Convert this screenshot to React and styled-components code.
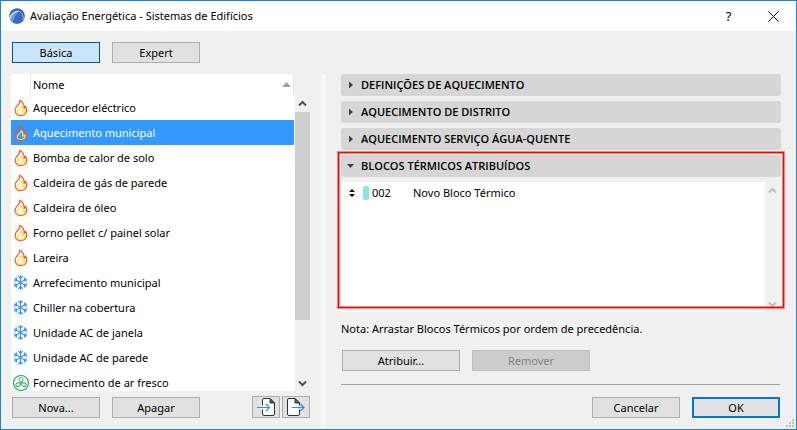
import React, { useState } from "react";
import styled, { createGlobalStyle, css } from "styled-components";

const GlobalStyle = createGlobalStyle`
  *, *::before, *::after { box-sizing: border-box; }
  body { margin: 0; background: #f0f0f0; }
  body, button { font-family: "Noto Sans", "Open Sans", sans-serif; font-size: 11px; color: #000; }
`;

const Window = styled.div`
  display: flex;
  flex-direction: column;
  height: 100vh;
  border: 1px solid #1883d7;
  background: #f0f0f0;
  position: relative;
`;

const TitleBar = styled.header`
  display: flex;
  align-items: center;
  flex: none;
  height: 30px;
  padding: 0 10px 0 8px;
  background: #fff;
`;

const Title = styled.h1`
  flex: 1;
  margin: 0 0 0 5px;
  font-size: 11px;
  line-height: 18px;
  font-weight: 400;
`;

const CaptionButton = styled.button`
  display: flex;
  align-items: center;
  justify-content: center;
  width: 25px;
  height: 24px;
  padding: 0;
  margin-left: 20px;
  border: 0;
  background: transparent;
  font-size: 13px;
`;

const Toolbar = styled.div`
  display: flex;
  flex: none;
  gap: 12px;
  padding: 11px;
`;

const Button = styled.button`
  flex: 0 0 ${(p) => (p.$wide ? "118px" : "88px")};
  height: 21px;
  padding: 0;
  line-height: 18px;
  border: 1px solid #adadad;
  background: #e1e1e1;
  ${(p) => p.$pressed && css`
    border-color: #005499;
    background: #cce4f7;
  `}
  ${(p) => p.$primary && css`
    border: 2px solid #0078d7;
    line-height: 16px;
  `}
  &:disabled {
    border-color: #bfbfbf;
    background: #ccc;
    color: #838383;
  }
`;

const IconButton = styled.button`
  display: flex;
  align-items: center;
  justify-content: center;
  flex: 0 0 28px;
  height: 22px;
  padding: 0;
  border: 1px solid #adadad;
  background: #e1e1e1;
`;

const Body = styled.main`
  flex: 1;
  min-height: 0;
  display: grid;
  grid-template-columns: 299fr 11px 5px 15px 440fr;
  grid-template-rows: minmax(0, 1fr);
  padding: 0 15px 0 10px;
`;

const Column = styled.section`
  display: flex;
  flex-direction: column;
  min-width: 0;
  min-height: 0;
  padding-bottom: 11px;
`;

const DetailColumn = styled(Column)`
  grid-column: 5;
`;

const Divider = styled.div`
  grid-column: 3;
  background: #f7f7f7;
`;

const ListHead = styled.div`
  display: flex;
  align-items: center;
  flex: none;
  height: 21px;
  margin-right: 16px;
  padding-right: 2px;
  background: #fff;
  border-right: 1px solid #e5e5e5;
`;

const HeadIconCell = styled.span`
  flex: none;
  width: 20px;
  height: 21px;
  border-right: 1px solid #e5e5e5;
`;

const HeadLabel = styled.span`
  flex: 1;
  padding: 1px 0 0 2px;
  line-height: 18px;
`;

const ListBody = styled.div`
  flex: 1;
  min-height: 0;
  display: flex;
`;

const Items = styled.ul`
  flex: 1;
  min-width: 0;
  margin: 0;
  padding: 0;
  list-style: none;
  overflow: hidden;
  background: #fff;
`;

const Item = styled.li`
  display: flex;
  align-items: center;
  height: 25px;
  margin-right: 1px;
  padding-left: 2px;
  gap: 4px;
  white-space: nowrap;
  background: ${(p) => (p.$selected ? "#3399ff" : "transparent")};
  color: ${(p) => (p.$selected ? "#fff" : "#000")};
  svg { flex: none; }
`;

const ScrollBar = styled.div`
  flex: 0 0 15px;
  display: flex;
  flex-direction: column;
  align-items: center;
  background: #f0f0f0;
  padding: 5px 0 4px;
`;

const Track = styled.div`
  flex: 1;
  align-self: stretch;
  display: flex;
  flex-direction: column;
  margin: 5px 0;
`;

const Thumb = styled.div`
  flex: 0 0 79%;
  background: #cdcdcd;
`;

const Actions = styled.div`
  display: flex;
  flex: none;
  align-items: flex-end;
  gap: 12px;
  padding-left: 1px;
  margin-top: 5px;
`;

const IconGroup = styled.div`
  display: flex;
  gap: 2px;
  margin-left: auto;
`;

const Panel = styled.section`
  flex: none;
  margin-bottom: 5px;
  position: relative;
`;

const OpenPanel = styled(Panel)`
  flex: 1;
  min-height: 0;
  margin-bottom: 0;
  display: flex;
  flex-direction: column;
`;

const PanelHeader = styled.button`
  display: flex;
  align-items: center;
  flex: none;
  width: 100%;
  height: 22px;
  padding: 0 6px;
  gap: 6px;
  border: 0;
  border-radius: 3px;
  background: #d6d6d6;
  font-family: "Open Sans", "Noto Sans", sans-serif;
  font-weight: 600;
  line-height: 18px;
  text-align: left;
`;

const PanelBody = styled.div`
  flex: 1;
  min-height: 0;
  display: flex;
  margin: 5px 1px 0 0;
  background: #fff;
`;

const BlockRow = styled.div`
  flex: 1;
  display: flex;
  align-items: center;
  align-self: flex-start;
  height: 21px;
  padding-left: 8px;
`;

const Swatch = styled.span`
  width: 6px;
  height: 14px;
  margin: 0 3px 0 8px;
  border-radius: 2px;
  background: #8ce6e6;
`;

const BlockId = styled.span`
  width: 41px;
`;

const Highlight = styled.div`
  position: absolute;
  inset: -3px -3px 4px;
  border: 1px solid #f00;
  box-shadow: 0 0 0 1px rgba(255, 0, 0, 0.45), inset 0 0 0 1px rgba(255, 0, 0, 0.45);
  pointer-events: none;
`;

const Note = styled.p`
  flex: none;
  margin: 8px 0 7px;
  line-height: 18px;
`;

const Footer = styled.footer`
  display: flex;
  flex: none;
  justify-content: flex-end;
  gap: 12px;
  margin: 13px 1px 0 0;
  padding-top: 12px;
  border-top: 1px solid #a0a0a0;
`;

const Grip = styled.svg`
  position: absolute;
  right: 2px;
  bottom: 2px;
`;

const Logo = () => (
  <svg width="16" height="16" viewBox="0 0 16 16" aria-hidden="true">
    <defs>
      <linearGradient id="globe" x1="0" y1="0" x2="1" y2="1">
        <stop offset="0" stopColor="#2f78c8" />
        <stop offset="1" stopColor="#2c459f" />
      </linearGradient>
    </defs>
    <circle cx="8" cy="8" r="7.8" fill="url(#globe)" />
    <path d="M.6 11C2.400 6 5.500 3.600 9.500 3.300" fill="none" stroke="#e6effa" strokeWidth="1.600" />
    <path d="M1.200 12.300C3 7 6 4.500 9.800 4.300 6.500 6.500 4.600 10 4 14.700Z" fill="#6c9be6" />
    <path d="M9.800 4.300C12.500 5 13.600 8.500 13.800 12.300 11.500 15.200 8 16 5 15 5 10.500 6.900 6.500 9.800 4.300Z" fill="#3c66cb" />
    <path d="M9.600 3.400C12.500 3.600 14.200 7 14.600 11.500" fill="none" stroke="#c2d4f2" strokeWidth=".9" />
  </svg>
);

const Flame = () => (
  <svg width="16" height="18" viewBox="0 0 16 18" fill="none" aria-hidden="true">
    <path d="M6.800 1.300C7.400 4.200 5 5.800 3.300 8 1.300 10.700 1.700 14 4.400 15.700 6.800 17.100 10.300 16.800 12.200 14.800 14.100 12.800 13.800 9.500 12.500 7.200 12.300 8.300 11.900 9 11.100 9.400 11.300 6 9.800 2.800 6.800 1.300Z" stroke="#f4512c" strokeWidth="1.200" strokeLinejoin="round" />
    <path d="M8.300 6.800C8.300 9.300 4.700 9.900 4.200 12.300 3.900 14.300 5.500 15.500 7.800 15.500 10.600 15.500 12.300 14 12.400 11 11.500 12 10.700 12.200 9.600 12.200 10.200 10.200 9.700 8 8.300 6.800Z" stroke="#ffe03a" strokeWidth="1.200" strokeLinejoin="round" />
  </svg>
);

const Snow = () => (
  <svg width="16" height="18" viewBox="0 0 16 18" fill="none" stroke="#3690ff" strokeWidth="1.200" aria-hidden="true">
    {[0, 60, 120, 180, 240, 300].map((a) => (
      <path key={a} transform={`rotate(${a} 7.500 8.500)`} d="M7.500 8.500V1.200M5.300 2.100 7.500 4.300 9.700 2.100" />
    ))}
  </svg>
);

const Fan = () => (
  <svg width="16" height="18" viewBox="0 0 16 18" fill="none" stroke="#18a554" overflow="visible" aria-hidden="true">
    <circle cx="8" cy="9" r="7.500" strokeWidth="1.100" />
    {[0, 120, 240].map((a) => (
      <path key={a} transform={`rotate(${a} 8 9)`} d="M7.600 7.800C5.500 6.500 5.400 3.700 7.700 3.400 10.200 3.100 10.500 5.800 8.800 8.100" />
    ))}
    <circle cx="8" cy="9" r="1.100" />
  </svg>
);

const PageIcon = ({ out }) => (
  <svg width="20" height="20" viewBox="0 0 20 20" fill="none" aria-hidden="true">
    <g transform={out ? "translate(-5 0)" : undefined}>
      <path d="M6.500 3Q6.500 1.500 8 1.500H14L18.500 6V17Q18.500 18.500 17 18.500H8Q6.500 18.500 6.500 17Z" fill="#fff" stroke="#26323a" />
      <path d="M14 1.500V6H18.500Z" fill="#5c666c" stroke="#26323a" />
    </g>
    {out
      ? <path d="M12 10.500H15" stroke="#e1e1e1" strokeWidth="4" />
      : <path d="M5 10.500H8" stroke="#fff" strokeWidth="4" />}
    <path d={out ? "M6 10.500H18M14.500 7 18 10.500 14.500 14" : "M1 10.500H13.500M10 7 13.500 10.500 10 14"} stroke="#3d84f5" strokeWidth="1.200" />
  </svg>
);

const Chevron = ({ down, color = "#505050" }) => (
  <svg width="9" height="7" viewBox="0 0 9 7" fill="none" aria-hidden="true">
    <path d={down ? "M1 1.500 4.500 5 8 1.500" : "M1 5.500 4.500 2 8 5.500"} stroke={color} strokeWidth="2" />
  </svg>
);

const Disclosure = ({ open }) => (
  <svg width="8" height="8" viewBox="0 0 8 8" fill="#404040" aria-hidden="true">
    <path d={open ? "M0 2H7L3.500 6Z" : "M2 0.500V7.500L6 4Z"} />
  </svg>
);

const ICONS = { flame: Flame, snow: Snow, fan: Fan };

const SYSTEMS = [
  ["flame", "Aquecedor eléctrico"],
  ["flame", "Aquecimento municipal"],
  ["flame", "Bomba de calor de solo"],
  ["flame", "Caldeira de gás de parede"],
  ["flame", "Caldeira de óleo"],
  ["flame", "Forno pellet c/ painel solar"],
  ["flame", "Lareira"],
  ["snow", "Arrefecimento municipal"],
  ["snow", "Chiller na cobertura"],
  ["snow", "Unidade AC de janela"],
  ["snow", "Unidade AC de parede"],
  ["fan", "Fornecimento de ar fresco"],
];

const PANELS = ["DEFINIÇÕES DE AQUECIMENTO", "AQUECIMENTO DE DISTRITO", "AQUECIMENTO SERVIÇO ÁGUA-QUENTE"];

export default function App() {
  const [selected, setSelected] = useState(1);
  return (
    <>
      <GlobalStyle />
      <Window>
        <TitleBar>
          <Logo />
          <Title>Avaliação Energética - Sistemas de Edifícios</Title>
          <CaptionButton aria-label="Ajuda">?</CaptionButton>
          <CaptionButton aria-label="Fechar">
            <svg width="11" height="11" viewBox="0 0 11 11" stroke="#000" aria-hidden="true">
              <path d="M.5.5 10.500 10.500M10.500.5.5 10.500" />
            </svg>
          </CaptionButton>
        </TitleBar>
        <Toolbar>
          <Button $pressed aria-pressed="true">Básica</Button>
          <Button aria-pressed="false">Expert</Button>
        </Toolbar>
        <Body>
          <Column>
            <ListHead>
              <HeadIconCell />
              <HeadLabel>Nome</HeadLabel>
              <svg width="9" height="5" viewBox="0 0 9 5" fill="#a0a0a0" aria-hidden="true"><path d="M0 5 4.500 0 9 5Z" /></svg>
            </ListHead>
            <ListBody>
              <Items>
                {SYSTEMS.map(([kind, name], i) => {
                  const Icon = ICONS[kind];
                  return (
                    <Item key={name} $selected={i === selected} onClick={() => setSelected(i)}>
                      <Icon />
                      {name}
                    </Item>
                  );
                })}
              </Items>
              <ScrollBar>
                <Chevron />
                <Track><Thumb /></Track>
                <Chevron down />
              </ScrollBar>
            </ListBody>
            <Actions>
              <Button>Nova...</Button>
              <Button>Apagar</Button>
              <IconGroup>
                <IconButton aria-label="Importar"><PageIcon /></IconButton>
                <IconButton aria-label="Exportar"><PageIcon out /></IconButton>
              </IconGroup>
            </Actions>
          </Column>
          <Divider />
          <DetailColumn>
            {PANELS.map((name) => (
              <Panel key={name}>
                <PanelHeader aria-expanded="false"><Disclosure />{name}</PanelHeader>
              </Panel>
            ))}
            <OpenPanel>
              <PanelHeader aria-expanded="true"><Disclosure open />BLOCOS TÉRMICOS ATRIBUÍDOS</PanelHeader>
              <PanelBody>
                <BlockRow>
                  <svg width="6" height="8" viewBox="0 0 6 8" aria-hidden="true"><path d="M0 3 3 0 6 3ZM0 5 3 8 6 5Z" /></svg>
                  <Swatch />
                  <BlockId>002</BlockId>
                  Novo Bloco Térmico
                </BlockRow>
                <ScrollBar>
                  <Chevron color="#bfbfbf" />
                  <Track />
                  <Chevron down color="#bfbfbf" />
                </ScrollBar>
              </PanelBody>
              <Highlight />
            </OpenPanel>
            <Note>Nota: Arrastar Blocos Térmicos por ordem de precedência.</Note>
            <Actions>
              <Button $wide>Atribuir...</Button>
              <Button $wide disabled>Remover</Button>
            </Actions>
            <Footer>
              <Button>Cancelar</Button>
              <Button $primary>OK</Button>
            </Footer>
          </DetailColumn>
        </Body>
        <Grip width="8" height="8" viewBox="0 0 8 8" fill="#bfbfbf" aria-hidden="true">
          <path d="M6 0h2v2h-2zM3 3h2v2h-2zM6 3h2v2h-2zM0 6h2v2h-2zM3 6h2v2h-2zM6 6h2v2h-2z" />
        </Grip>
      </Window>
    </>
  );
}
